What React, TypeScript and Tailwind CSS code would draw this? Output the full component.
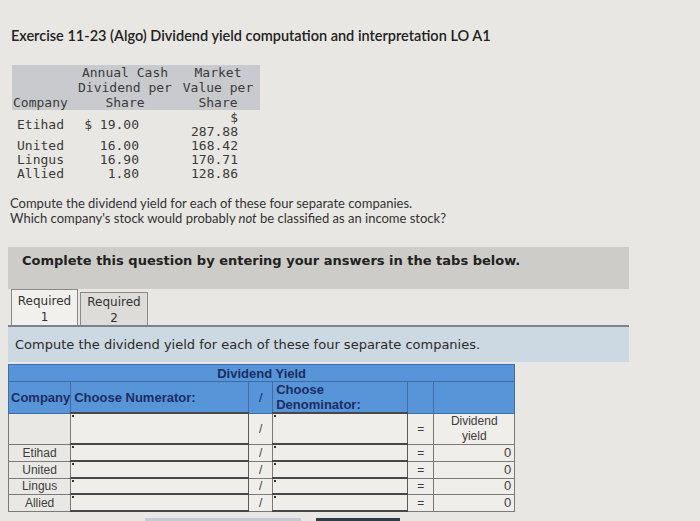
const companies = [
  { name: 'Etihad', div: '$ 19.00', price: '287.88', wrap: true },
  { name: 'United', div: '16.00', price: '168.42' },
  { name: 'Lingus', div: '16.90', price: '170.71' },
  { name: 'Allied', div: '1.80', price: '128.86' },
];

const ROW_H = [17, 17, 16, 17];

function InputCell({ h }: { h: number }) {
  return (
    <td
      className="relative border-x border-[#5b5b5b] border-t-2 border-t-[#474747] border-b-2 border-b-[#474747] bg-[#efeeea] p-0"
      style={{ height: h }}
    >
      <span className="absolute left-[1px] top-[1px] h-[2px] w-[2px] bg-[#333]" />
    </td>
  );
}

export default function App() {
  return (
    <div className="h-[521px] w-[700px] overflow-hidden bg-[#e8e7e3] text-[#2b2b2b]">
      {/* Title */}
      <div
        className="pl-[11px] pt-[27px] text-[14.5px] font-semibold leading-[18px] text-[#222]"
        style={{ fontFamily: 'Lato, "Liberation Sans", sans-serif' }}
      >
        Exercise 11-23 (Algo) Dividend yield computation and interpretation LO A1
      </div>

      {/* Given data */}
      <table
        className="ml-[12px] mt-[20px] table-fixed border-collapse text-[13px] text-[#3a3a3a]"
        style={{ fontFamily: '"DejaVu Sans Mono", "Liberation Mono", monospace' }}
      >
        <colgroup>
          <col className="w-[62px]" />
          <col className="w-[102px]" />
          <col className="w-[84px]" />
        </colgroup>
        <thead>
          <tr className="bg-[#c8cacd] align-bottom leading-[15px]">
            <th className="h-[45px] p-0 pl-[1px] text-left font-normal">Company</th>
            <th className="p-0 text-center font-normal">
              Annual Cash
              <br />
              Dividend per
              <br />
              Share
            </th>
            <th className="p-0 text-center font-normal">
              Market
              <br />
              Value per
              <br />
              Share
            </th>
          </tr>
        </thead>
        <tbody className="leading-[14px]">
          {companies.map((c, i) => (
            <tr key={c.name}>
              <td className={`p-0 pl-[5px] ${i === 0 ? 'pt-[1px]' : ''}`}>{c.name}</td>
              <td className={`p-0 pr-[37px] text-right ${i === 0 ? 'pt-[1px]' : ''}`}>{c.div}</td>
              <td className={`p-0 pr-[22px] text-right ${i === 0 ? 'pt-[1px]' : ''}`}>
                {c.wrap ? (
                  <>
                    $
                    <br />
                    {c.price}
                  </>
                ) : (
                  c.price
                )}
              </td>
            </tr>
          ))}
        </tbody>
      </table>

      {/* Question */}
      <div
        className="mt-[15px] pl-[10px] text-[13px] leading-[15px] text-[#333]"
        style={{ fontFamily: 'Lato, "Liberation Sans", sans-serif' }}
      >
        <p>Compute the dividend yield for each of these four separate companies.</p>
        <p>
          Which company's stock would probably <i>not</i> be classified as an income stock?
        </p>
      </div>

      <div style={{ fontFamily: '"DejaVu Sans", Verdana, sans-serif' }}>
        {/* Banner */}
        <div className="ml-[8px] mt-[21px] h-[42px] w-[621px] bg-[#cdccc8] pl-[14px] pt-[5px] text-[13px] font-bold leading-[17px] text-[#222]">
          Complete this question by entering your answers in the tabs below.
        </div>

        {/* Tabs */}
        <div className="ml-[11px] flex items-end gap-[2px]">
          <div className="h-[36px] w-[67px] border border-b-0 border-[#8a8a8a] bg-[#f1f0ec] pt-[3px] text-center text-[12px] leading-[16px] text-[#333]">
            Required
            <br />1
          </div>
          <div className="h-[33px] w-[68px] border border-b-0 border-[#8a8a8a] bg-[#dddcd8] pt-[1px] text-center text-[12px] leading-[16px] text-[#333]">
            Required
            <br />2
          </div>
        </div>

        {/* Instruction bar */}
        <div className="ml-[8px] flex h-[37px] w-[621px] items-center border-t-2 border-[#7d8287] bg-[#ccd8e2] pl-[7px] text-[13px] text-[#2a2a2a]">
          Compute the dividend yield for each of these four separate companies.
        </div>
      </div>

      {/* Answer table */}
      <table
        className="ml-[8px] mt-[2px] table-fixed border-collapse text-[12px] text-[#3d3d3d]"
        style={{ fontFamily: '"Liberation Sans", Arial, sans-serif' }}
      >
        <colgroup>
          <col className="w-[62px]" />
          <col className="w-[178px]" />
          <col className="w-[24px]" />
          <col className="w-[135px]" />
          <col className="w-[26px]" />
          <col className="w-[81px]" />
        </colgroup>
        <thead className="bg-[#5895d8] font-bold text-[#1b2d63]">
          <tr>
            <th colSpan={6} className="h-[17px] border border-[#3f6ea6] p-0 text-center text-[13px] leading-[15px]">
              Dividend Yield
            </th>
          </tr>
          <tr className="text-[13px] leading-[15px]">
            <th className="h-[31px] border border-[#3f6ea6] p-0 pl-[2px] text-left">Company</th>
            <th className="border border-[#3f6ea6] p-0 pl-[3px] text-left">Choose Numerator:</th>
            <th className="border border-[#3f6ea6] p-0 text-center font-normal">/</th>
            <th className="border border-[#3f6ea6] p-0 pl-[3px] text-left">
              Choose
              <br />
              Denominator:
            </th>
            <th className="border border-[#3f6ea6] p-0" />
            <th className="border border-[#3f6ea6] p-0" />
          </tr>
        </thead>
        <tbody className="leading-[14px]">
          <tr>
            <td className="h-[30px] border border-[#7a7a7a] bg-[#e9e8e4] p-0" />
            <InputCell h={30} />
            <td className="border border-[#7a7a7a] bg-[#efeeea] p-0 text-center">/</td>
            <InputCell h={30} />
            <td className="border border-[#7a7a7a] bg-[#efeeea] p-0 text-center">=</td>
            <td className="border border-[#7a7a7a] bg-[#efeeea] p-0 text-center leading-[15px]">
              Dividend
              <br />
              yield
            </td>
          </tr>
          {companies.map((c, i) => (
            <tr key={c.name}>
              <td
                className="border border-[#7a7a7a] bg-[#e9e8e4] p-0 text-center"
                style={{ height: ROW_H[i] }}
              >
                {c.name}
              </td>
              <InputCell h={ROW_H[i]} />
              <td className="border border-[#7a7a7a] bg-[#efeeea] p-0 text-center">/</td>
              <InputCell h={ROW_H[i]} />
              <td className="border border-[#7a7a7a] bg-[#efeeea] p-0 text-center">=</td>
              <td className="border border-[#7a7a7a] bg-[#efeeea] p-0 pr-[3px] text-right text-[13px]">0</td>
            </tr>
          ))}
        </tbody>
      </table>

      {/* Buttons (cut off) */}
      <div className="mt-[6px] flex gap-[15px] pl-[145px]">
        <div className="h-[10px] w-[156px] bg-[#c4cbd1]" />
        <div className="h-[10px] w-[84px] bg-[#2e3c4a]" />
      </div>
    </div>
  );
}
